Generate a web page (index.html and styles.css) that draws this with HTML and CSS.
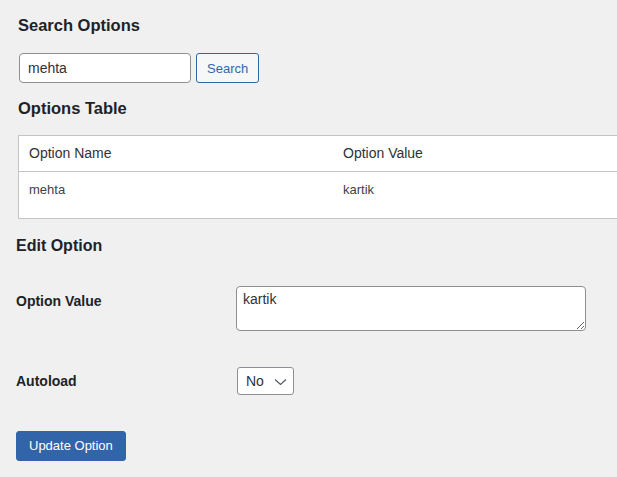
FILE: index.html
```html
<!DOCTYPE html>
<html lang="en">
<head>
<meta charset="utf-8">
<title>Options</title>
<link rel="stylesheet" href="styles.css">
</head>
<body>
<main class="page">
  <section class="search-section">
    <h2 class="heading heading-search">Search Options</h2>
    <form class="search-form">
      <input class="search-input" type="text" value="mehta">
      <button class="button-secondary" type="button">Search</button>
    </form>
    <h2 class="heading heading-table">Options Table</h2>
    <table class="options-table">
      <colgroup><col class="col"><col class="col"></colgroup>
      <thead>
        <tr><th>Option Name</th><th>Option Value</th></tr>
      </thead>
      <tbody>
        <tr><td>mehta</td><td>kartik</td></tr>
      </tbody>
    </table>
  </section>
  <section class="edit-section">
    <h2 class="heading heading-edit">Edit Option</h2>
    <div class="form-row row-value">
      <label class="form-label label-value">Option Value</label>
      <textarea class="value-input">kartik</textarea>
    </div>
    <div class="form-row row-autoload">
      <label class="form-label">Autoload</label>
      <span class="select-wrap">
        <select class="select-input"><option>No</option><option>Yes</option></select>
        <svg class="select-chevron" width="13" height="8" viewBox="0 0 13 8" aria-hidden="true"><path d="M1 1.5 L6.5 6.5 L12 1.5" fill="none" stroke="#50575e" stroke-width="1.1"/></svg>
      </span>
    </div>
    <button class="button-primary" type="button">Update Option</button>
  </section>
</main>
</body>
</html>
```

FILE: styles.css
```css
html, body {
  margin: 0;
  padding: 0;
  background: #f0f0f1;
  overflow: hidden;
}
body {
  font-family: "Liberation Sans", Arial, sans-serif;
  color: #1d2327;
  width: 617px;
  height: 477px;
}
.page {
  padding: 15px 0 0 16px;
  overflow: hidden;
}
.heading {
  margin: 0;
  font-weight: 700;
  color: #1d2327;
  line-height: 20px;
}
.search-section {
  padding-left: 2px;
}
.heading-search,
.heading-table {
  font-size: 16.5px;
}
.search-form {
  display: flex;
  gap: 5px;
  margin: 18px 0 0 1px;
}
.search-input {
  box-sizing: border-box;
  width: 172px;
  height: 30px;
  padding: 0 8px;
  border: 1px solid #8c8f94;
  border-radius: 4px;
  background: #fff;
  font: 14px "Liberation Sans", Arial, sans-serif;
  color: #2c3338;
}
.button-secondary {
  box-sizing: border-box;
  height: 30px;
  padding: 0 10px;
  border: 1px solid #2f66ab;
  border-radius: 3px;
  background: #f6f7f7;
  color: #2f66ab;
  font: 13px "Liberation Sans", Arial, sans-serif;
}
.heading-table {
  margin-top: 15px;
}
.options-table {
  margin-top: 17px;
  width: 630px;
  table-layout: fixed;
  border-collapse: collapse;
  background: #fff;
  border: 1px solid #c3c4c7;
}
.options-table .col {
  width: 50%;
}
.options-table th {
  text-align: left;
  font-weight: 400;
  font-size: 14px;
  line-height: 19px;
  padding: 8px 10px;
  color: #2c3338;
  border-bottom: 1px solid #c3c4c7;
}
.options-table td {
  font-size: 13px;
  line-height: 19.5px;
  padding: 8px 10px 18px;
  color: #3c434a;
}
.heading-edit {
  font-size: 16px;
  margin-top: 17px;
}
.form-row {
  display: flex;
}
.form-label {
  width: 220px;
  flex: none;
  font-size: 14px;
  font-weight: 700;
  line-height: 18px;
  color: #1d2327;
}
.row-value {
  margin-top: 30px;
  align-items: flex-start;
}
.label-value {
  padding-top: 6px;
}
.value-input {
  box-sizing: border-box;
  width: 350px;
  height: 45px;
  margin: 0;
  padding: 2px 6px;
  border: 1px solid #8c8f94;
  border-radius: 4px;
  background: #fff;
  font: 14px/20px "Liberation Sans", Arial, sans-serif;
  color: #2c3338;
}
.row-autoload {
  margin-top: 36px;
  align-items: center;
}
.select-wrap {
  position: relative;
  display: inline-flex;
  margin-left: 1px;
}
.select-input {
  box-sizing: border-box;
  width: 57px;
  height: 28px;
  padding: 0 20px 0 8px;
  border: 1px solid #8c8f94;
  border-radius: 3px;
  background: #fff;
  appearance: none;
  -webkit-appearance: none;
  font: 14px "Liberation Sans", Arial, sans-serif;
  color: #2c3338;
}
.select-chevron {
  position: absolute;
  right: 7px;
  top: 11px;
  pointer-events: none;
}
.button-primary {
  display: block;
  box-sizing: border-box;
  margin-top: 36px;
  height: 30px;
  padding: 0 12px;
  border: 1px solid #3264a9;
  border-radius: 3px;
  background: #3264a9;
  color: #fff;
  font: 13px "Liberation Sans", Arial, sans-serif;
}
```
